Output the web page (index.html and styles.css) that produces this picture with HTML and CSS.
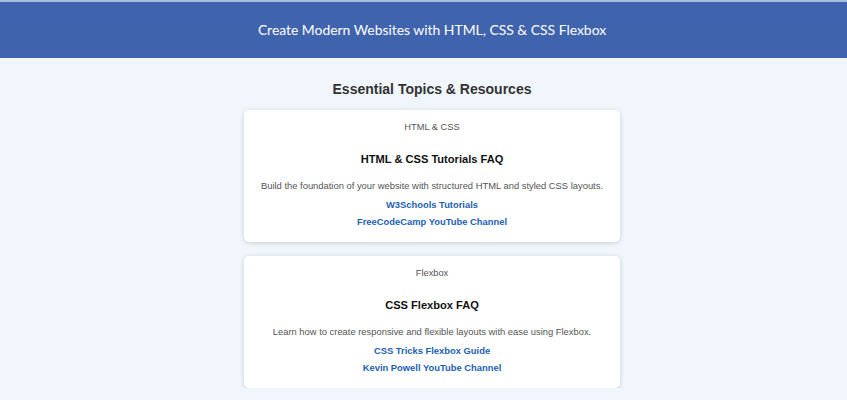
FILE: index.html
```html
<!DOCTYPE html>
<html lang="en">
<head>
<meta charset="utf-8">
<title>Create Modern Websites</title>
<link rel="stylesheet" href="styles.css">
</head>
<body>
<header class="site-header">
  <h1 class="site-title">Create Modern Websites with HTML, CSS &amp; CSS Flexbox</h1>
</header>
<main class="content">
  <h2 class="section-title">Essential Topics &amp; Resources</h2>
  <section class="card">
    <p class="card-tag">HTML &amp; CSS</p>
    <h3 class="card-title">HTML &amp; CSS Tutorials FAQ</h3>
    <p class="card-desc">Build the foundation of your website with structured HTML and styled CSS layouts.</p>
    <a class="card-link" href="#">W3Schools Tutorials</a>
    <a class="card-link" href="#">FreeCodeCamp YouTube Channel</a>
  </section>
  <section class="card">
    <p class="card-tag">Flexbox</p>
    <h3 class="card-title">CSS Flexbox FAQ</h3>
    <p class="card-desc">Learn how to create responsive and flexible layouts with ease using Flexbox.</p>
    <a class="card-link" href="#">CSS Tricks Flexbox Guide</a>
    <a class="card-link" href="#">Kevin Powell YouTube Channel</a>
  </section>
</main>
</body>
</html>
```
FILE: styles.css
```css
html, body {
  margin: 0;
  padding: 0;
}
body {
  background: #f0f6fc;
  font-family: "Liberation Sans", Arial, sans-serif;
  border-top: 2px solid #a9bde3;
}
.site-header {
  background: #3f64ad;
  height: 56px;
  display: flex;
  align-items: center;
  justify-content: center;
  padding-left: 17px;
}
.site-title {
  margin: 0;
  font-family: "Lato", sans-serif;
  font-weight: 400;
  font-size: 13.9px;
  line-height: 18px;
  color: #ffffff;
}
.content {
  display: flex;
  flex-direction: column;
  align-items: center;
  padding-left: 17px;
  gap: 14px;
}
.section-title {
  margin: 22px 0 -2px;
  font-size: 14px;
  line-height: 18px;
  font-weight: 700;
  color: #333333;
}
.card {
  width: 376px;
  box-sizing: border-box;
  background: #ffffff;
  border-radius: 5px;
  box-shadow: 0 1px 5px rgba(0, 0, 0, 0.17);
  display: flex;
  flex-direction: column;
  align-items: center;
  padding: 10px 0 13px;
}
.card-tag {
  margin: 0;
  font-size: 9.3px;
  line-height: 14px;
  color: #555555;
}
.card-title {
  margin: 18px 0 0;
  font-size: 11.1px;
  line-height: 14px;
  font-weight: 700;
  color: #111111;
}
.card-desc {
  margin: 13px 0 0;
  font-size: 9.4px;
  line-height: 14px;
  color: #555555;
}
.card-link {
  margin-top: 5px;
  font-size: 9.4px;
  line-height: 14px;
  font-weight: 700;
  color: #1c5fb3;
  text-decoration: none;
}
.card-link + .card-link {
  margin-top: 3px;
}
```
